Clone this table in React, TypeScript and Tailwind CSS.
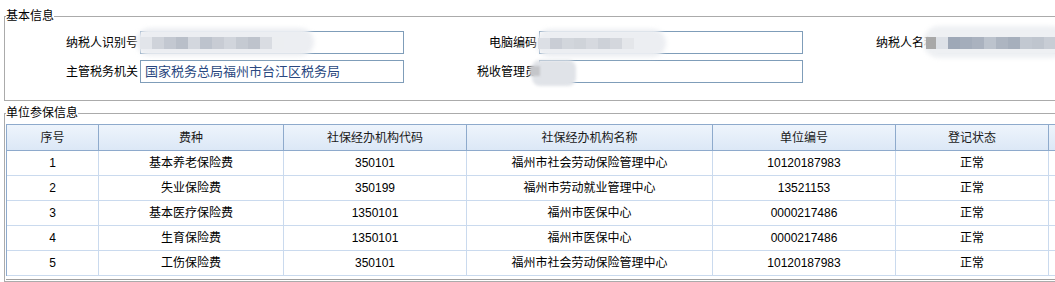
import React from 'react';

const columns = ['序号', '费种', '社保经办机构代码', '社保经办机构名称', '单位编号', '登记状态', ''];

const rows = [
  ['1', '基本养老保险费', '350101', '福州市社会劳动保险管理中心', '10120187983', '正常'],
  ['2', '失业保险费', '350199', '福州市劳动就业管理中心', '13521153', '正常'],
  ['3', '基本医疗保险费', '1350101', '福州市医保中心', '0000217486', '正常'],
  ['4', '生育保险费', '1350101', '福州市医保中心', '0000217486', '正常'],
  ['5', '工伤保险费', '350101', '福州市社会劳动保险管理中心', '10120187983', '正常'],
];

const blocks1 = ['#e2e5ea', '#cfd3da', '#c3c8d1', '#b9bfc9', '#d3d7de', '#bdc3cd', '#c8ccd4', '#d1d5dc', '#c5cad2', '#bec3cc', '#d9dce2', '#eceef1'];
const blocks2 = ['#dcdfe5', '#c9cdd5', '#d2d6dc', '#cfd3d9', '#d6d9df', '#cdd1d8', '#d4d7dd', '#e4e6ea'];
const blocks4 = ['#dde1e7', '#9ea8b7', '#a4adbb', '#aab2bf', '#bcc3cd', '#adb5c1', '#a6afbc', '#c2c8d1', '#bfc5ce', '#c8cdd5'];

function Field({ label, value }: { label: string; value?: string }) {
  return (
    <>
      <div className="flex items-center justify-end pr-[2px] text-black">{label}</div>
      <div className="h-[23px] border border-[#7f9db9] bg-white px-[4px] flex items-center text-[13px] text-[#2a4880]">
        {value}
      </div>
    </>
  );
}

export default function App() {
  return (
    <div className="w-[1055px] h-[282px] overflow-hidden bg-white text-[12px] font-['Liberation_Sans','Noto_Sans_CJK_SC',sans-serif]">
      {/* 基本信息 */}
      <fieldset className="mt-[9px] ml-[4px] w-[1100px] border border-[#ababab] pb-[17px]">
        <legend className="ml-[1px] leading-[14px] text-black">基本信息</legend>
        <div className="relative mt-[8px] grid grid-cols-[135px_264px_135px_264px_135px_264px] grid-rows-[23px_23px] gap-y-[6px]">
          <Field label="纳税人识别号" />
          <Field label="电脑编码" />
          <Field label="纳税人名称" />
          <Field label="主管税务机关" value="国家税务总局福州市台江区税务局" />
          <Field label="税收管理员" />

          {/* blurred values */}
          <div className="absolute left-[131px] top-[-3px] w-[178px] h-[28px] rounded-full bg-[#eceef2] blur-[2px]" />
          <div className="absolute left-[135px] top-[6px] flex h-[12px] blur-[0.6px]">
            {blocks1.map((c, i) => (
              <div key={i} className="w-[12px] h-full" style={{ backgroundColor: c }} />
            ))}
          </div>
          <div className="absolute left-[531px] top-[-2px] w-[130px] h-[28px] rounded-full bg-[#eceef2] blur-[2px]" />
          <div className="absolute left-[533px] top-[7px] flex h-[11px] blur-[0.6px]">
            {blocks2.map((c, i) => (
              <div key={i} className="w-[12px] h-full" style={{ backgroundColor: c }} />
            ))}
          </div>
          <div className="absolute left-[527px] top-[29px] w-[44px] h-[26px] rounded-[8px] bg-[#e0e3e8] blur-[1.5px]" />
          <div className="absolute left-[525px] top-[35px] w-[10px] h-[10px] bg-[#c4c6ca] blur-[1px]" />
          <div className="absolute left-[918px] top-[-5px] w-[145px] h-[32px] rounded-full bg-[#eef0f3] blur-[2px]" />
          <div className="absolute left-[921px] top-[6px] w-[10px] h-[12px] bg-[#a8a8a8] blur-[0.6px]" />
          <div className="absolute left-[931px] top-[6px] flex h-[12px] blur-[0.6px]">
            {blocks4.map((c, i) => (
              <div key={i} className="w-[12px] h-full" style={{ backgroundColor: c }} />
            ))}
          </div>
        </div>
      </fieldset>

      {/* 单位参保信息 */}
      <fieldset className="mt-[5px] ml-[4px] w-[1100px] border border-[#ababab] pb-[1px]">
        <legend className="ml-[1px] leading-[14px] text-black">单位参保信息</legend>
        <div className="mt-[4px] ml-[1px] border-b border-[#a0a0a0] pb-[3px]">
          <div className="border-t border-l border-[#8eaacc]">
            <div className="grid grid-cols-[92px_185px_183px_246px_183px_153px_120px] h-[26px] bg-linear-to-b from-[#eef4fc] to-[#dbe7f6]">
              {columns.map((c, i) => (
                <div key={i} className="flex items-center justify-center border-r border-b border-[#8eaacc] text-[#1a1a1a]">
                  {c}
                </div>
              ))}
            </div>
            {rows.map((r, ri) => (
              <div key={ri} className="grid grid-cols-[92px_185px_183px_246px_183px_153px_120px] h-[25px]">
                {[...r, ''].map((v, ci) => (
                  <div key={ci} className="flex items-center justify-center border-r border-b border-[#cadaee] text-black">
                    {v}
                  </div>
                ))}
              </div>
            ))}
          </div>
        </div>
      </fieldset>
    </div>
  );
}
